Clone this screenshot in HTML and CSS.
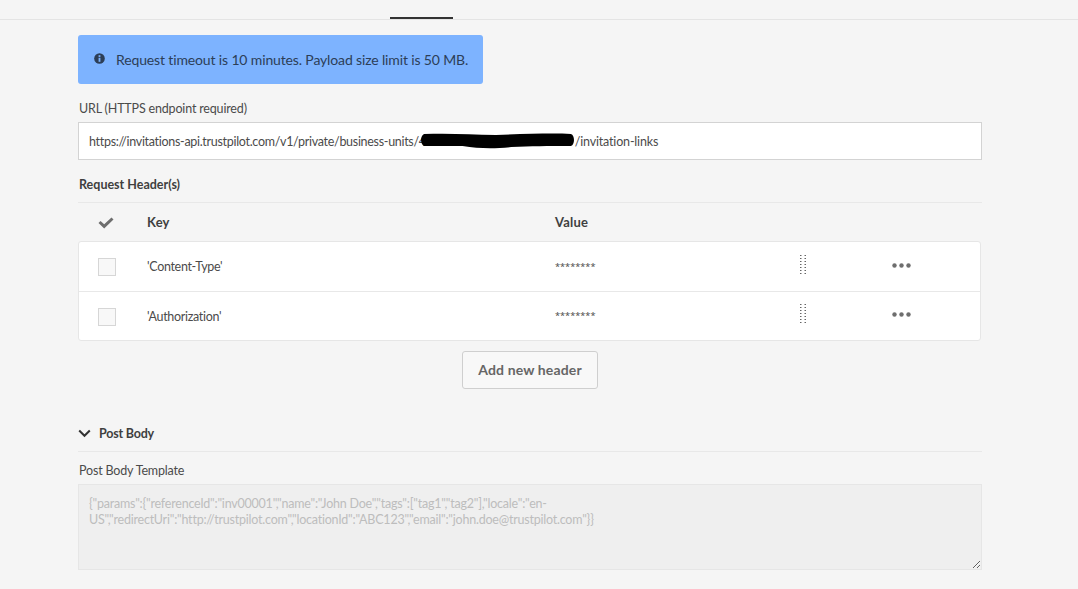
FILE: index.html
```html
<!DOCTYPE html>
<html lang="en">
<head>
<meta charset="utf-8">
<title>Request settings</title>
<link rel="stylesheet" href="styles.css">
</head>
<body>
<div class="tabbar"><span class="tab-active"></span></div>
<main class="content">
  <div class="alert">
    <svg class="alert-icon" width="11" height="11" viewBox="0 0 12 12"><circle cx="6" cy="6" r="5.8" fill="#2c3e57"/><rect x="5" y="2.400" width="2" height="1.900" fill="#7db3ff"/><rect x="5" y="5.200" width="2" height="4.400" fill="#7db3ff"/></svg>
    <span class="alert-text">Request timeout is 10 minutes. Payload size limit is 50 MB.</span>
  </div>
  <label class="field-label url-label">URL (HTTPS endpoint required)</label>
  <div class="url-input"><span class="url-head">https://invitations-api.trustpilot.com/v1/private/business-units/4</span><svg class="redaction" width="155" height="16" viewBox="0 0 153 16" preserveAspectRatio="none"><path d="M4 1 C30 0 50 1.500 75 2 C105 1 130 0 149 1 C153 2 153 12 149 13 C125 13 110 13 90 14 C72 16 58 15.500 42 13 C25 13 12 13 4 13 C0 11 0 3 4 1Z" fill="#000"/></svg><span class="url-tail">/invitation-links</span></div>

  <h2 class="section-title headers-title">Request Header(s)</h2>
  <div class="table-head">
    <svg width="16" height="13" viewBox="0 0 16 13"><path d="M0.500 7 L2.500 5 L6.200 8.200 L13.500 1.500 L15.500 3.500 L6.200 12.500Z" fill="#6e6e6e"/></svg>
    <span class="head-key">Key</span>
    <span class="head-value">Value</span>
  </div>
  <div class="table-card">
    <div class="row">
      <span class="checkbox"></span>
      <span class="cell-key">'Content-Type'</span>
      <span class="secret">********</span>
      <svg class="drag" width="8" height="20" viewBox="0 0 8 20"><path d="M1 0.500H7M1 3.500H7M1 6.500H7M1 9.500H7M1 12.500H7M1 15.500H7M1 18.500H7" stroke="#666" stroke-width="1.200" stroke-dasharray="1.500 3"/></svg>
      <svg class="more" width="19" height="5" viewBox="0 0 19 5"><circle cx="2.500" cy="2.500" r="2.200" fill="#6e6e6e"/><circle cx="9.500" cy="2.500" r="2.200" fill="#6e6e6e"/><circle cx="16.500" cy="2.500" r="2.200" fill="#6e6e6e"/></svg>
    </div>
    <div class="row">
      <span class="checkbox"></span>
      <span class="cell-key">'Authorization'</span>
      <span class="secret">********</span>
      <svg class="drag" width="8" height="20" viewBox="0 0 8 20"><path d="M1 0.500H7M1 3.500H7M1 6.500H7M1 9.500H7M1 12.500H7M1 15.500H7M1 18.500H7" stroke="#666" stroke-width="1.200" stroke-dasharray="1.500 3"/></svg>
      <svg class="more" width="19" height="5" viewBox="0 0 19 5"><circle cx="2.500" cy="2.500" r="2.200" fill="#6e6e6e"/><circle cx="9.500" cy="2.500" r="2.200" fill="#6e6e6e"/><circle cx="16.500" cy="2.500" r="2.200" fill="#6e6e6e"/></svg>
    </div>
  </div>
  <div class="button-row"><button class="add-button" type="button">Add new header</button></div>

  <div class="collapse-head">
    <svg class="chevron" width="13" height="9" viewBox="0 0 13 9"><path d="M1.200 1.500 L6.500 6.800 L11.800 1.500" fill="none" stroke="#333" stroke-width="2"/></svg>
    <h2 class="section-title post-title">Post Body</h2>
  </div>
  <label class="field-label body-label">Post Body Template</label>
  <textarea class="body-template" disabled>{"params":{"referenceId":"inv00001","name":"John Doe","tags":["tag1","tag2"],"locale":"en-US","redirectUri":"http://trustpilot.com","locationId":"ABC123","email":"john.doe@trustpilot.com"}}</textarea>
</main>
</body>
</html>
```
FILE: styles.css
```css
* { box-sizing: border-box; }
html, body { margin: 0; padding: 0; }
body {
  width: 1078px;
  height: 589px;
  overflow: hidden;
  background: #f5f5f5;
  color: #4b4b4b;
  font-family: "Lato", "Noto Sans", sans-serif;
  font-size: 12.5px;
}
.tabbar {
  height: 20px;
  border-bottom: 1px solid #e4e4e4;
  padding-left: 390px;
  display: flex;
  align-items: flex-end;
}
.tab-active {
  display: block;
  width: 63px;
  height: 2px;
  background: #333;
}
.content {
  width: 904px;
  margin-left: 78px;
  padding-top: 15px;
  display: flex;
  flex-direction: column;
  align-items: stretch;
}
.alert {
  width: 405px;
  height: 49px;
  background: #7db3ff;
  border-radius: 3px;
  display: flex;
  align-items: center;
  padding-left: 16px;
  gap: 11px;
  color: #2c3e57;
  font-size: 14px;
}
.alert-text { white-space: nowrap; letter-spacing: -0.14px; }
.alert-icon { margin-top: -3px; }
.field-label {
  display: block;
  height: 16px;
  line-height: 16px;
  padding-left: 1px;
  letter-spacing: -0.17px;
  color: #4b4b4b;
}
.url-label { margin-top: 17px; }
.url-input {
  margin-top: 5px;
  height: 38px;
  background: #fff;
  border: 1px solid #d3d3d3;
  padding-left: 10px;
  display: flex;
  align-items: center;
  white-space: nowrap;
  color: #4b4b4b;
}
.url-head { letter-spacing: -0.3px; }
.redaction { flex: none; margin-left: -6px; margin-top: -1px; }
.url-tail { letter-spacing: -0.18px; }
.section-title {
  margin: 0;
  font-size: 12.5px;
  font-weight: 700;
  color: #3f3f3f;
  line-height: 16px;
}
.headers-title { margin-top: 17px; padding-left: 1px; padding-bottom: 10px; border-bottom: 1px solid #e8e8e8; height: 26px; }
.post-title { letter-spacing: -0.2px; }
.table-head {
  height: 38px;
  display: flex;
  align-items: center;
  padding-left: 20px;
  font-size: 13px;
  font-weight: 700;
  letter-spacing: 0.2px;
  color: #3f3f3f;
}
.head-key { margin-left: 33px; width: 408px; }
.table-card {
  width: 903px;
  background: #fff;
  border: 1px solid #e6e6e6;
  border-radius: 3px;
}
.row {
  height: 49px;
  display: grid;
  grid-template-columns: 68px 408px 244px 93px 1fr;
  align-items: center;
}
.row + .row { border-top: 1px solid #e8e8e8; }
.row + .row .checkbox { margin-top: 2px; }
.cell-key { letter-spacing: -0.32px; }
.checkbox {
  display: block;
  width: 18px;
  height: 18px;
  margin-left: 19px;
  background: #f8f8f8;
  border: 1px solid #d6d6d6;
}
.secret { font-family: "Noto Sans", sans-serif; font-size: 9.200px; line-height: 16px; }
.drag { display: block; margin-top: -4px; }
.more { display: block; margin-top: -3px; }
.button-row { display: flex; justify-content: flex-start; padding-left: 384px; margin-top: 10px; }
.add-button {
  width: 136px;
  height: 38px;
  background: #f8f8f8;
  border: 1px solid #cfcfcf;
  border-radius: 3px;
  font-family: inherit;
  font-size: 14px;
  font-weight: 700;
  letter-spacing: 0.14px;
  color: #666;
  padding: 0 0 2px;
}
.collapse-head {
  margin-top: 35px;
  height: 28px;
  display: flex;
  align-items: center;
  gap: 8px;
  padding-bottom: 7px;
  border-bottom: 1px solid #e8e8e8;
}
.chevron { margin-top: -2px; }
.body-label { margin-top: 11px; }
.body-template {
  display: block;
  margin-top: 5px;
  width: 904px;
  height: 86px;
  background: #efefef;
  border: 1px solid #e6e6e6;
  color: #bdbdbd;
  padding: 11px 10px;
  font-family: inherit;
  font-size: 12.5px;
  letter-spacing: -0.22px;
  line-height: 16px;
  resize: vertical;
}
```
